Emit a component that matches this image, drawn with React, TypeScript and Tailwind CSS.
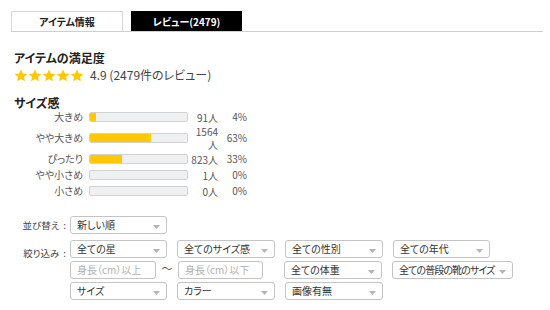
import React from 'react'

const font = { fontFamily: '"Noto Sans CJK JP", "Noto Sans", sans-serif' }

const sizes = [
  { label: '大きめ', count: '91人', pct: '4%', ratio: 0.04 },
  { label: 'やや大きめ', count: '1564人', pct: '63%', ratio: 0.63 },
  { label: 'ぴったり', count: '823人', pct: '33%', ratio: 0.33 },
  { label: 'やや小さめ', count: '1人', pct: '0%', ratio: 0 },
  { label: '小さめ', count: '0人', pct: '0%', ratio: 0 },
]

function Star() {
  return (
    <svg width="14" height="13" viewBox="0 0 24 23">
      <path d="M12 0.8l3.3 7.1 7.8.9-5.8 5.3 1.6 7.7L12 17.9l-6.9 3.9 1.6-7.7L.9 8.8l7.8-.9z" fill="#ffc800" />
    </svg>
  )
}

function Select({ label, w, tight }: { label: string; w: string; tight?: boolean }) {
  return (
    <div className={`${w} h-[18px] flex items-center justify-between rounded-[3px] border border-[#c4c4c4] bg-white pl-[6px] pr-[6px] shrink-0`}>
      <span className={`whitespace-nowrap text-[10px] leading-none text-[#333] ${tight ? 'tracking-[-0.9px]' : ''}`}>{label}</span>
      <svg width="7" height="4" viewBox="0 0 7 4" className="mt-[3px] ml-[2px] shrink-0">
        <path d="M0 0h7L3.5 4z" fill="#b5b5b5" />
      </svg>
    </div>
  )
}

function Input({ placeholder, w }: { placeholder: string; w: string }) {
  return (
    <div className={`${w} h-[18px] flex items-center rounded-[3px] border border-[#c4c4c4] bg-white pl-[6px] shrink-0`}>
      <span className="whitespace-nowrap text-[10px] leading-none text-[#b0b0b0]">{placeholder}</span>
    </div>
  )
}

function Label({ text, className = '' }: { text: string; className?: string }) {
  return (
    <span className={`w-[44px] mr-[4px] shrink-0 flex justify-end whitespace-nowrap text-[9.5px] leading-[14px] text-[#444] ${className}`}>
      {text}
      <span className="ml-[4px]">:</span>
    </span>
  )
}

export default function App() {
  return (
    <div className="w-[550px] h-[310px] bg-white text-[#333] overflow-hidden [font-feature-settings:'palt']" style={font}>
      {/* Tabs */}
      <div className="ml-[11px] mr-[7px] mt-[11px] flex gap-[8px] border-b border-[#cfcfcf]">
        <div className="w-[112px] h-[20px] flex items-center justify-center border border-b-0 border-[#d6d6d6] text-[10px] font-bold text-[#222]">
          アイテム情報
        </div>
        <div className="w-[111px] h-[20px] flex items-center justify-center bg-black text-[10px] font-bold text-white">
          レビュー(2479)
        </div>
      </div>

      {/* Satisfaction */}
      <div className="pl-[14px] mt-[18px]">
        <h2 className="text-[12px] font-bold leading-[16px] text-[#222]">アイテムの満足度</h2>
        <div className="mt-[1px] flex items-center gap-[6px]">
          <div className="flex">
            <Star />
            <Star />
            <Star />
            <Star />
            <Star />
          </div>
          <span className="text-[12px] leading-[16px] text-[#444]">4.9 (2479件のレビュー)</span>
        </div>

        <h2 className="mt-[12px] text-[12px] font-bold leading-[16px] text-[#222]">サイズ感</h2>
        <div className="-mt-[2px]">
          {sizes.map((s) => (
            <div key={s.label} className="flex items-center">
              <div className="w-[69px] text-right text-[10px] leading-[16px] text-[#555]">{s.label}</div>
              <div className="ml-[6px] w-[99px] h-[10px] rounded-[2px] border border-[#d2d2d2] bg-[#eef0f2] overflow-hidden">
                <div className="h-full bg-[#ffc800]" style={{ width: `${Math.max(s.ratio * 100, s.ratio > 0 ? 6 : 0)}%` }} />
              </div>
              <div className="w-[30px] text-right text-[10px] leading-[13px] text-[#555]">{s.count}</div>
              <div className="w-[29px] text-right text-[10px] leading-[16px] text-[#555]">{s.pct}</div>
            </div>
          ))}
        </div>
      </div>

      {/* Filters */}
      <div className="mt-[17px] pl-[22px] flex flex-col">
        <div className="flex items-center">
          <Label text="並び替え" />
          <Select label="新しい順" w="w-[97px]" />
        </div>
        <div className="mt-[6px] flex">
          <Label text="絞り込み" className="mt-[6px]" />
          <div className="flex flex-col gap-[3px]">
            <div className="flex gap-[10px]">
              <Select label="全ての星" w="w-[97px]" />
              <Select label="全てのサイズ感" w="w-[98px]" />
              <Select label="全ての性別" w="w-[98px]" />
              <Select label="全ての年代" w="w-[97px]" />
            </div>
            <div className="flex">
              <Input placeholder="身長（cm）以上" w="w-[86px]" />
              <span className="w-[22px] text-center text-[11px] leading-[14px] text-[#555]">〜</span>
              <Input placeholder="身長（cm）以下" w="w-[85px]" />
              <div className="ml-[21px] flex gap-[10px]">
                <Select label="全ての体重" w="w-[98px]" />
                <Select label="全ての普段の靴のサイズ" w="w-[121px]" tight />
              </div>
            </div>
            <div className="flex gap-[10px]">
              <Select label="サイズ" w="w-[97px]" />
              <Select label="カラー" w="w-[98px]" />
              <Select label="画像有無" w="w-[98px]" />
            </div>
          </div>
        </div>
      </div>
    </div>
  )
}
